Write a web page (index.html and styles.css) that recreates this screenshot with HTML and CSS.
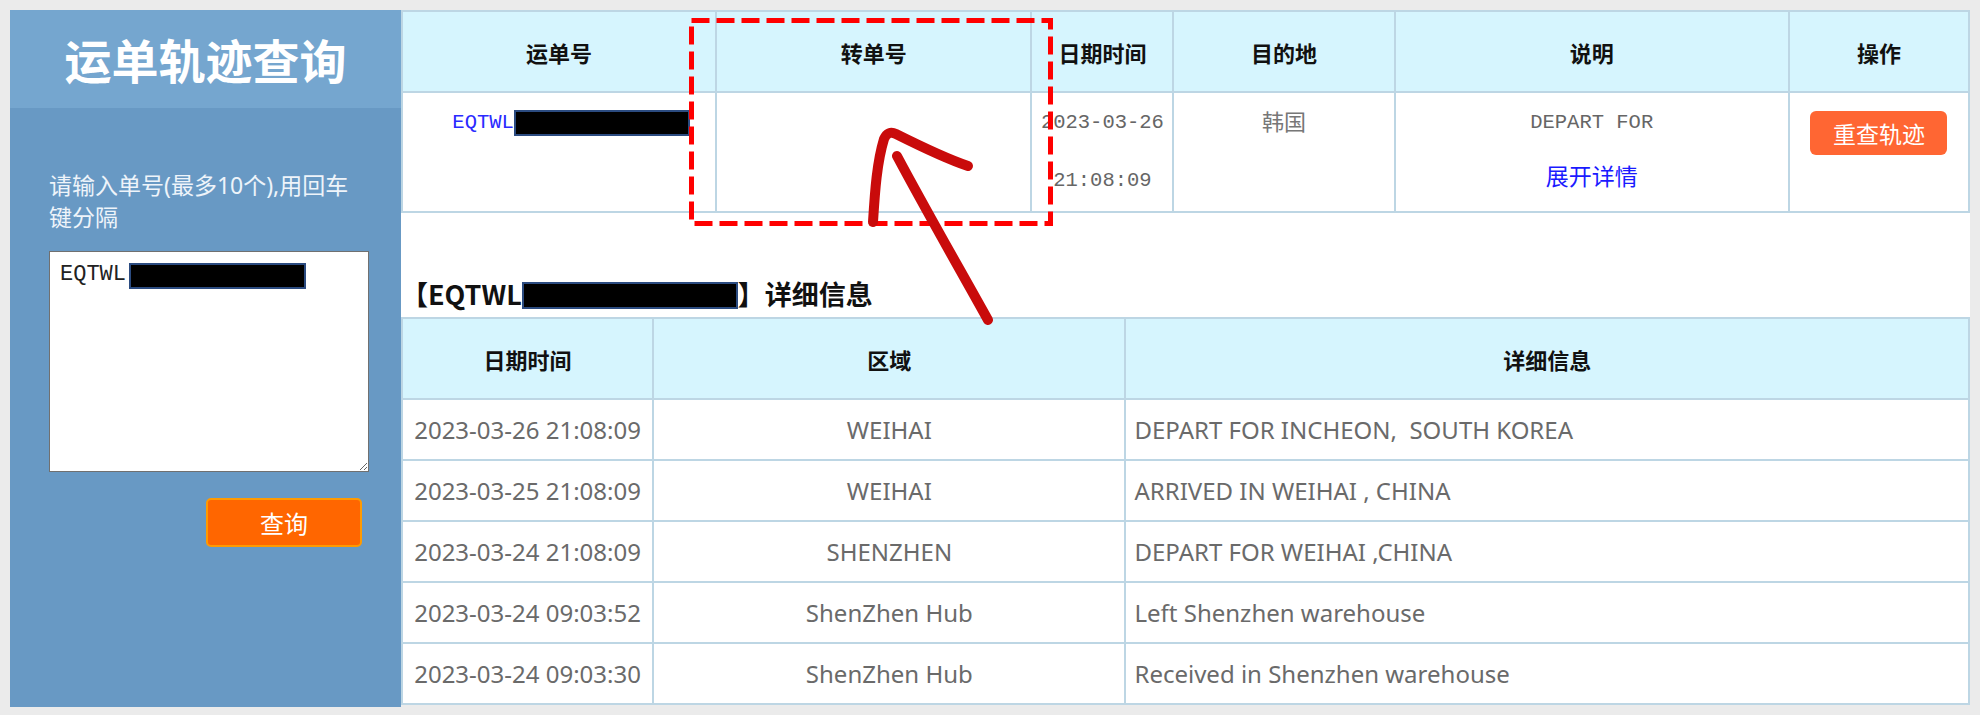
FILE: index.html
```html
<!DOCTYPE html>
<html lang="zh-CN">
<head>
  <meta charset="UTF-8" />
  <meta name="viewport" content="width=device-width, initial-scale=1.0" />
  <title>运单轨迹查询</title>
  <link rel="stylesheet" href="styles.css">
</head>
<body>
  <div class="page">
    <aside class="side">
      <h1 class="side-title">运单轨迹查询</h1>
      <div class="side-body">
        <p class="tip">请输入单号(最多10个),用回车键分隔</p>
        <div class="input-wrap">
          <textarea class="nos" spellcheck="false">EQTWL</textarea>
          <span class="mask mask-ta"></span>
        </div>
        <div class="btn-row">
          <button type="button" class="query-btn">查询</button>
        </div>
      </div>
    </aside>

    <main class="main">
      <table class="sum-table">
        <colgroup>
          <col style="width:314px"><col style="width:315px"><col style="width:142px">
          <col style="width:221px"><col style="width:394px"><col style="width:180px">
        </colgroup>
        <tr>
          <th>运单号</th>
          <th>转单号</th>
          <th>日期时间</th>
          <th>目的地</th>
          <th>说明</th>
          <th>操作</th>
        </tr>
        <tr>
          <td class="no-cell"><span class="no">EQTWL</span><span class="mask mask-no"></span></td>
          <td></td>
          <td class="mono">2023-03-26 21:08:09</td>
          <td class="dest">韩国</td>
          <td><div class="mono">DEPART FOR</div><a class="more" href="#">展开详情</a></td>
          <td><button type="button" class="retry-btn">重查轨迹</button></td>
        </tr>
      </table>

      <h3 class="detail-title">【EQTWL<span class="mask mask-title"></span>】详细信息</h3>

      <table class="track-table">
        <colgroup>
          <col style="width:251px"><col style="width:472px"><col style="width:843px">
        </colgroup>
        <tr>
          <th>日期时间</th>
          <th>区域</th>
          <th>详细信息</th>
        </tr>
        <tr>
          <td>2023-03-26 21:08:09</td>
          <td>WEIHAI</td>
          <td class="info">DEPART FOR INCHEON,&nbsp; SOUTH KOREA</td>
        </tr>
        <tr>
          <td>2023-03-25 21:08:09</td>
          <td>WEIHAI</td>
          <td class="info">ARRIVED IN WEIHAI , CHINA</td>
        </tr>
        <tr>
          <td>2023-03-24 21:08:09</td>
          <td>SHENZHEN</td>
          <td class="info">DEPART FOR WEIHAI ,CHINA</td>
        </tr>
        <tr>
          <td>2023-03-24 09:03:52</td>
          <td>ShenZhen Hub</td>
          <td class="info">Left Shenzhen warehouse</td>
        </tr>
        <tr>
          <td>2023-03-24 09:03:30</td>
          <td>ShenZhen Hub</td>
          <td class="info">Received in Shenzhen warehouse</td>
        </tr>
      </table>
    </main>
  </div>

  <!-- hand-drawn annotation on top of the screenshot -->
  <svg class="marks" width="1980" height="715" viewBox="0 0 1980 715">
    <rect x="691.5" y="20.5" width="359" height="203" fill="none" stroke="#ff0000" stroke-width="5" stroke-dasharray="18 7"/>
    <path d="M873 222 C875 190 877 162 884 139 Q888 130 896 134 C920 146 944 158 968 166" fill="none" stroke="#c90b0b" stroke-width="10" stroke-linecap="round" stroke-linejoin="round"/>
    <path d="M897 156 C928 214 958 266 988 320" fill="none" stroke="#c90b0b" stroke-width="10" stroke-linecap="round"/>
  </svg>
</body>
</html>
```

FILE: styles.css
```css
body {
  margin: 0;
  padding: 10px;
  background: #ebebeb;
  font-family: "Noto Sans", "Noto Sans CJK SC", sans-serif;
  position: relative;
}
.page {
  display: flex;
  align-items: flex-start;
}
.side {
  width: 391px;
  height: 697px;
  background: #6899c4;
  flex-shrink: 0;
}
.side-title {
  margin: 0;
  height: 98px;
  line-height: 98px;
  background: #75a6cf;
  color: #fff;
  text-align: center;
  font-family: "Noto Sans CJK SC", sans-serif;
  font-size: 47px;
  font-weight: bold;
}
.side-body {
  padding: 61px 32px 0 39px;
}
.tip {
  margin: 0;
  color: #eef4fa;
  font-size: 23px;
  line-height: 32px;
}
.input-wrap {
  position: relative;
  margin-top: 18px;
}
.nos {
  display: block;
  width: 320px;
  height: 221px;
  box-sizing: border-box;
  margin: 0;
  padding: 10px;
  border: 1px solid #707070;
  font-family: "Liberation Mono", monospace;
  font-size: 22px;
  line-height: 26px;
  color: #222;
}
.mask {
  display: inline-block;
  box-sizing: border-box;
  background: #000;
  border: 2px solid #2b4b80;
}
.mask-ta {
  position: absolute;
  left: 80px;
  top: 12px;
  width: 177px;
  height: 26px;
}
.btn-row {
  margin-top: 26px;
  padding-right: 7px;
  text-align: right;
}
.query-btn {
  width: 156px;
  height: 49px;
  background: #ff6600;
  border: 2px solid #ff9a00;
  border-radius: 5px;
  color: #fff;
  font-family: "Noto Sans CJK SC", sans-serif;
  font-size: 24px;
  cursor: pointer;
}

.main {
  flex: 1;
  background: #fff;
}
table {
  width: 100%;
  border-collapse: collapse;
  table-layout: fixed;
}
th, td {
  border: 2px solid #bdd6e4;
  text-align: center;
}
th {
  height: 79px;
  padding: 0;
  background: #d6f5fe;
  color: #111;
  font-family: "Noto Sans CJK SC", sans-serif;
  font-size: 22px;
  font-weight: bold;
}
.sum-table td {
  height: 116px;
  padding: 1px 4px;
  vertical-align: top;
  line-height: 58px;
  font-family: "Noto Sans CJK SC", sans-serif;
  font-size: 22px;
  color: #777;
}
.sum-table .dest {
  line-height: 52px;
}
.sum-table .mono,
.no {
  font-family: "Liberation Mono", monospace;
  font-size: 20.5px;
}
.sum-table .mono {
  color: #666;
}
.no-cell {
  padding-left: 28px !important;
}
.no {
  color: #2a2aff;
  vertical-align: top;
}
.mask-no {
  width: 176px;
  height: 26px;
  vertical-align: top;
  margin-top: 16px;
}
.more {
  display: block;
  line-height: 46px;
  color: #1a1aff;
  text-decoration: none;
  font-size: 23px;
}
.retry-btn {
  vertical-align: top;
  margin-top: 17px;
  width: 137px;
  height: 44px;
  background: #ff6633;
  border: none;
  border-radius: 6px;
  color: #fff;
  font-family: "Noto Sans CJK SC", sans-serif;
  font-size: 23px;
  cursor: pointer;
}

.detail-title {
  margin: 58px 0 0;
  line-height: 46px;
  height: 46px;
  color: #111;
  font-family: "Noto Sans CJK SC", sans-serif;
  font-size: 27px;
  font-weight: bold;
}
.mask-title {
  width: 216px;
  height: 27px;
  vertical-align: -4px;
}
.track-table td {
  height: 59px;
  padding: 0 8px;
  font-size: 24px;
  color: #6a6a6a;
}
.track-table .info {
  text-align: left;
}

.marks {
  position: absolute;
  left: 0;
  top: 0;
  pointer-events: none;
}
```
